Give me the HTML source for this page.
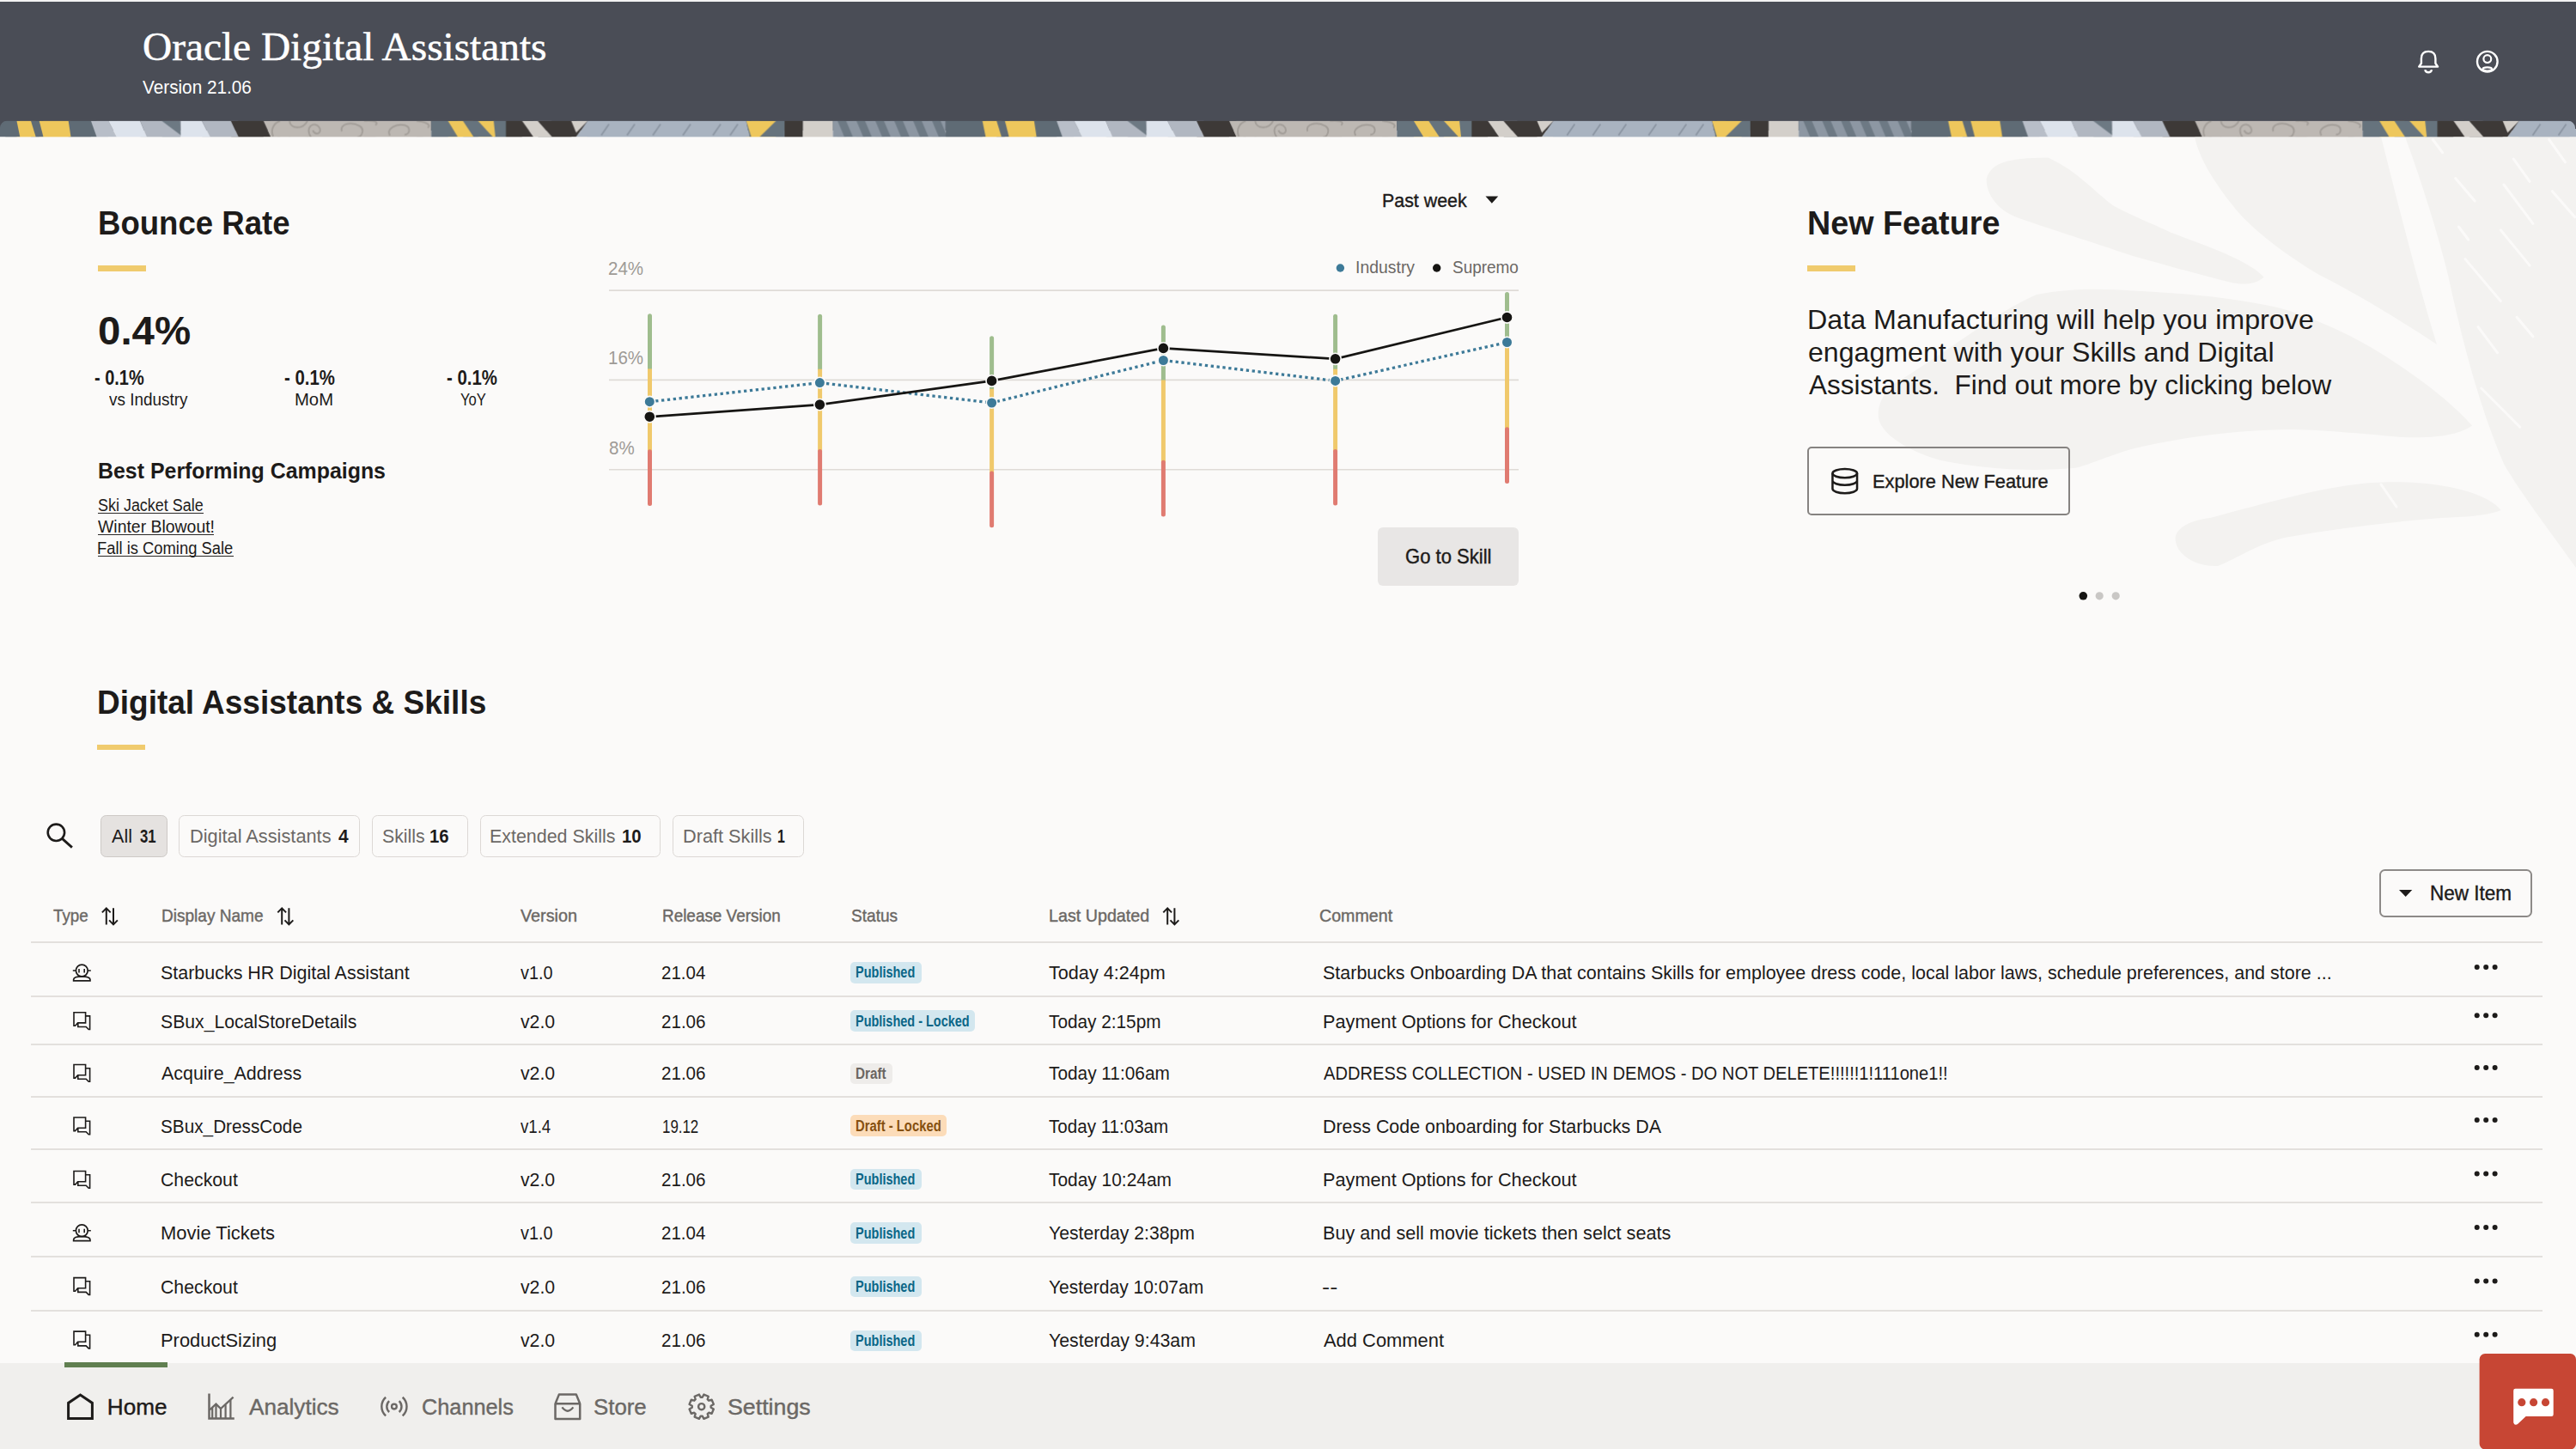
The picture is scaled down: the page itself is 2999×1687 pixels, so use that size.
<!DOCTYPE html>
<html><head><meta charset="utf-8"><title>Oracle Digital Assistants</title>
<style>
html,body{margin:0;padding:0;}
body{width:2999px;height:1687px;overflow:hidden;position:relative;background:#fbfaf9;font-family:"Liberation Sans",sans-serif;}
.t{position:absolute;white-space:nowrap;line-height:1;transform-origin:0 0;}
.b{position:absolute;}
.badge{position:absolute;height:24.5px;border-radius:5px;}
svg{position:absolute;left:0;top:0;}
</style></head><body>
<svg width="2999" height="1687" viewBox="0 0 2999 1687">

<path d="M2312.7,208.3 C2318,190 2335,184 2384.5,183.6 C2420,200 2440,225 2460.8,239.7 C2490,255 2510,262 2528,271 C2580,290 2620,305 2635.7,322.7 C2625,332 2610,331 2600,329.5 C2560,320 2520,308 2483,298 C2430,280 2390,268 2348.6,253.2 C2325,245 2312,225 2312.7,208.3 Z" fill="#f3f2f0"/>
<path d="M2187,486.5 C2185,470 2195,452 2214,441.6 C2280,400 2330,360 2371,343 C2410,335 2450,336 2483,338.4 C2560,342 2620,350 2662.7,360.9 C2720,380 2760,402 2797.3,428 C2830,450 2860,475 2878,495.4 C2860,508 2830,510 2797,509 C2750,505 2700,500 2662.7,500 C2580,502 2530,512 2483,522.4 C2450,532 2430,542 2416,544.8 C2360,550 2300,545 2259,535.8 C2220,525 2190,505 2187,486.5 Z" fill="#f3f2f0"/>
<path d="M2532.6,625.5 C2535,612 2555,605 2573,603 C2640,585 2700,568 2752,562.7 C2830,556 2895,572 2911.7,594 C2890,602 2860,602 2842,603 C2780,608 2720,615 2662.7,625.5 C2630,632 2605,650 2582,659 C2555,660 2532,645 2532.6,625.5 Z" fill="#f3f2f0"/>
<path d="M2555,159 L2772,159 C2790,230 2815,330 2837,401 C2790,370 2740,340 2700,320 C2650,290 2615,260 2600,240 C2580,215 2560,185 2555,159 Z" fill="#f3f2f0"/>
<path d="M2800,159 L2999,159 L2999,661 C2970,620 2935,575 2915,540 C2885,470 2865,390 2850,320 C2835,260 2815,200 2800,159 Z" fill="#f3f2f0"/>
<line x1="2832.3" y1="162.5" x2="2843.6" y2="177.6" stroke="#fbfaf9" stroke-width="3" stroke-linecap="round"/><line x1="2858.6" y1="207.6" x2="2881.2" y2="234" stroke="#fbfaf9" stroke-width="3" stroke-linecap="round"/><line x1="2915" y1="215" x2="2948.9" y2="260.3" stroke="#fbfaf9" stroke-width="3" stroke-linecap="round"/><line x1="2926.3" y1="185" x2="2945.1" y2="211.4" stroke="#fbfaf9" stroke-width="3" stroke-linecap="round"/><line x1="2967.7" y1="162.5" x2="2986.5" y2="188.8" stroke="#fbfaf9" stroke-width="3" stroke-linecap="round"/><line x1="2971.4" y1="222.7" x2="2997.7" y2="252.7" stroke="#fbfaf9" stroke-width="3" stroke-linecap="round"/><line x1="2862.4" y1="264" x2="2873.7" y2="279" stroke="#fbfaf9" stroke-width="3" stroke-linecap="round"/><line x1="2870" y1="301.6" x2="2911.3" y2="350.5" stroke="#fbfaf9" stroke-width="3" stroke-linecap="round"/><line x1="2911.3" y1="267.8" x2="2945.1" y2="309.1" stroke="#fbfaf9" stroke-width="3" stroke-linecap="round"/><line x1="2885" y1="380.6" x2="2907.5" y2="410.6" stroke="#fbfaf9" stroke-width="3" stroke-linecap="round"/><line x1="2930" y1="369.3" x2="2948.9" y2="391.8" stroke="#fbfaf9" stroke-width="3" stroke-linecap="round"/><line x1="2888.7" y1="452" x2="2933.8" y2="497.1" stroke="#fbfaf9" stroke-width="3" stroke-linecap="round"/><line x1="2772" y1="564" x2="2790" y2="590" stroke="#fbfaf9" stroke-width="3" stroke-linecap="round"/>
</svg>
<div class="b" style="left:0;top:0;width:2999px;height:1.6px;background:#f3f3f3"></div>
<div class="b" style="left:0;top:1.6px;width:2999px;height:150px;background:#4a4d56"></div>
<svg width="2999" height="1687" viewBox="0 0 2999 1687">
<defs><pattern id="pt" x="0" y="140.5" width="1124.3" height="19" patternUnits="userSpaceOnUse"><polygon points="-30.0,0.0 110.0,0.0 118.0,19.0 -30.0,19.0" fill="#5f6b75"/><polygon points="19.4,0.0 35.9,0.0 41.7,19.0 23.3,19.0" fill="#eec75c"/><polygon points="45.6,0.0 79.6,0.0 82.5,19.0 50.5,19.0" fill="#eec75c"/><polygon points="105.8,0.0 126.0,0.0 136.0,19.0 112.6,19.0" fill="#b8bec8"/><polygon points="126.0,0.0 163.0,0.0 170.8,19.0 136.0,19.0" fill="#dde3ec"/><polygon points="163.0,0.0 210.6,0.0 210.6,19.0 170.8,19.0" fill="#b1b7c1"/><polygon points="188.0,0.0 209.6,0.0 210.6,17.0" fill="#6d7983"/><polygon points="210.6,0.0 234.9,0.0 244.6,19.0 210.6,19.0" fill="#dde3ec"/><polygon points="234.9,0.0 268.8,0.0 277.6,19.0 244.6,19.0" fill="#b1b7c1"/><polygon points="268.8,0.0 306.7,0.0 315.4,19.0 277.6,19.0" fill="#3d3937"/><polygon points="306.7,0.0 502.0,0.0 502.0,19.0 315.4,19.0" fill="#bdb8b3"/><path transform="translate(0,-140.7)" d="M318,159 C314,150 320,143 326,141 M337,141 C338,150 352,152 358,141 M362,160 C354,148 366,140 372,149 C375,156 367,158 364,152 M398,153 C395,145 408,141 419,147 C425,151 421,160 416,160 M424,141 C434,140 442,142 437,146 M454,158 C449,150 461,144 471,146 C479,148 477,157 471,157 M485,141 C494,142 503,145 498,149" fill="none" stroke="#a39e99" stroke-width="2"/><polygon points="502.0,0.0 593.0,0.0 590.0,19.0 502.0,19.0" fill="#66737d"/><polygon points="521.4,0.0 538.8,0.0 551.4,19.0 533.0,19.0" fill="#eec75c"/><polygon points="556.3,0.0 574.7,0.0 576.7,19.0 573.8,19.0" fill="#eec75c"/><polygon points="589.0,0.0 607.7,0.0 621.3,19.0 589.0,19.0" fill="#3d3937"/><polygon points="607.7,0.0 626.0,0.0 642.7,19.0 621.3,19.0" fill="#d3cfca"/><polygon points="626.0,0.0 684.4,0.0 670.8,19.0 642.7,19.0" fill="#3d3937"/><polygon points="665.0,0.0 684.4,0.0 670.8,14.0" fill="#d3cfca"/><polygon points="684.4,0.0 868.8,0.0 872.7,19.0 670.8,19.0" fill="#a9b3c0"/><line x1="700" y1="17" x2="709" y2="4" stroke="#8a94a1" stroke-width="1.8"/><line x1="730" y1="17" x2="739" y2="4" stroke="#8a94a1" stroke-width="1.8"/><line x1="760" y1="17" x2="769" y2="4" stroke="#8a94a1" stroke-width="1.8"/><line x1="795" y1="17" x2="804" y2="4" stroke="#8a94a1" stroke-width="1.8"/><line x1="830" y1="17" x2="839" y2="4" stroke="#8a94a1" stroke-width="1.8"/><line x1="850" y1="17" x2="859" y2="4" stroke="#8a94a1" stroke-width="1.8"/><polygon points="868.8,0.0 913.4,0.0 913.4,19.0 872.7,19.0" fill="#66737d"/><polygon points="868.8,0.0 903.7,0.0 884.3,19.0 874.6,19.0" fill="#eec75c"/><polygon points="913.4,0.0 934.8,0.0 934.8,19.0 913.4,19.0" fill="#3d3937"/><polygon points="934.8,0.0 969.7,0.0 969.7,19.0 934.8,19.0" fill="#d3cfca"/><polygon points="969.7,0.0 1101.0,0.0 1101.0,19.0 969.7,19.0" fill="#8d97a3"/><polygon points="975.0,0.0 985.0,0.0 993.0,19.0 983.0,19.0" fill="#6d7984"/><polygon points="997.0,0.0 1007.0,0.0 1015.0,19.0 1005.0,19.0" fill="#6d7984"/><polygon points="1019.0,0.0 1029.0,0.0 1037.0,19.0 1027.0,19.0" fill="#6d7984"/><polygon points="1041.0,0.0 1051.0,0.0 1059.0,19.0 1049.0,19.0" fill="#6d7984"/><polygon points="1063.0,0.0 1073.0,0.0 1081.0,19.0 1071.0,19.0" fill="#6d7984"/><polygon points="1085.0,0.0 1095.0,0.0 1103.0,19.0 1093.0,19.0" fill="#6d7984"/><polygon points="1101.0,0.0 1155.0,0.0 1155.0,19.0 1101.0,19.0" fill="#5f6b75"/></pattern>
<clipPath id="bandclip"><rect x="0" y="140.8" width="2998" height="19" rx="8" ry="8"/><rect x="0" y="150" width="2999" height="9.5"/></clipPath></defs>
<rect x="0" y="140.5" width="2999" height="19" fill="url(#pt)" clip-path="url(#bandclip)"/>
</svg>
<div class="b" style="left:114px;top:309.1px;width:56.2px;height:6.5px;background:#f0cb6e"></div><div class="b" style="left:2104px;top:309.1px;width:56.2px;height:6.5px;background:#f0cb6e"></div><div class="b" style="left:112.5px;top:866.9px;width:56.2px;height:6.5px;background:#f0cb6e"></div><div class="b" style="left:114.1px;top:596.85px;width:123.0px;height:1.3px;background:#2a2826"></div><div class="b" style="left:114.1px;top:622.0500000000001px;width:134.9px;height:1.3px;background:#2a2826"></div><div class="b" style="left:114.1px;top:646.65px;width:157.6px;height:1.3px;background:#2a2826"></div><div class="b" style="left:1604.3px;top:614px;width:163.5px;height:68.2px;background:#e8e6e5;border-radius:6px"></div><div class="b" style="left:2104.3px;top:520.4px;width:305.7px;height:79.9px;border:2px solid #868381;border-radius:5px;box-sizing:border-box"></div><div class="b" style="left:117.3px;top:948.7px;width:77.3px;height:48.9px;border-radius:6.5px;box-sizing:border-box;background:#e5e2e0;border:1.5px solid #cdc9c6"></div><div class="b" style="left:208.1px;top:948.7px;width:211.4px;height:48.9px;border-radius:6.5px;box-sizing:border-box;border:1.5px solid #dcd8d5"></div><div class="b" style="left:433px;top:948.7px;width:111.60000000000002px;height:48.9px;border-radius:6.5px;box-sizing:border-box;border:1.5px solid #dcd8d5"></div><div class="b" style="left:558.5px;top:948.7px;width:210.79999999999995px;height:48.9px;border-radius:6.5px;box-sizing:border-box;border:1.5px solid #dcd8d5"></div><div class="b" style="left:782.9px;top:948.7px;width:153.39999999999998px;height:48.9px;border-radius:6.5px;box-sizing:border-box;border:1.5px solid #dcd8d5"></div><div class="b" style="left:2769.8px;top:1012.4px;width:178.6px;height:55.3px;border:2px solid #8d8a88;border-radius:6.5px;box-sizing:border-box"></div><div class="b" style="left:35.6px;top:1096px;width:2924.4px;height:1.5px;background:#e3e0dd"></div><div class="b" style="left:35.6px;top:1159px;width:2924.4px;height:1.5px;background:#e3e0dd"></div><div class="b" style="left:35.6px;top:1215px;width:2924.4px;height:1.5px;background:#e3e0dd"></div><div class="b" style="left:35.6px;top:1276px;width:2924.4px;height:1.5px;background:#e3e0dd"></div><div class="b" style="left:35.6px;top:1337px;width:2924.4px;height:1.5px;background:#e3e0dd"></div><div class="b" style="left:35.6px;top:1399px;width:2924.4px;height:1.5px;background:#e3e0dd"></div><div class="b" style="left:35.6px;top:1462px;width:2924.4px;height:1.5px;background:#e3e0dd"></div><div class="b" style="left:35.6px;top:1525px;width:2924.4px;height:1.5px;background:#e3e0dd"></div><div class="b" style="left:0px;top:1586.5px;width:2999px;height:101px;background:#f0efed"></div><div class="b" style="left:74.7px;top:1586.3px;width:120.4px;height:5.7px;background:#607f50"></div>
<div class="badge" style="left:990.4px;top:1120px;width:82.6px;background:#d3e7ef"></div><div class="badge" style="left:990.4px;top:1176.4px;width:145.1px;background:#d3e7ef"></div><div class="badge" style="left:990.4px;top:1237.5px;width:48.2px;background:#eeecea"></div><div class="badge" style="left:990.4px;top:1298.2px;width:112.1px;background:#fcdcb9"></div><div class="badge" style="left:990.4px;top:1360.6px;width:82.6px;background:#d3e7ef"></div><div class="badge" style="left:990.4px;top:1423.4px;width:82.6px;background:#d3e7ef"></div><div class="badge" style="left:990.4px;top:1485.8px;width:82.6px;background:#d3e7ef"></div><div class="badge" style="left:990.4px;top:1548.5px;width:82.6px;background:#d3e7ef"></div>
<svg width="2999" height="1687" viewBox="0 0 2999 1687">
<line x1="709" y1="338.1" x2="1768" y2="338.1" stroke="#dfdbd7" stroke-width="1.6"/><line x1="709" y1="442.4" x2="1768" y2="442.4" stroke="#dfdbd7" stroke-width="1.6"/><line x1="709" y1="546.8" x2="1768" y2="546.8" stroke="#dfdbd7" stroke-width="1.6"/><line x1="756.5" y1="367.7" x2="756.5" y2="429.4" stroke="#9fbd8e" stroke-width="5" stroke-linecap="round"/><line x1="756.5" y1="429.4" x2="756.5" y2="525.8" stroke="#f0c96c" stroke-width="5"/><line x1="756.5" y1="525.8" x2="756.5" y2="586.4" stroke="#e07b71" stroke-width="5" stroke-linecap="round"/><line x1="954.6" y1="368.2" x2="954.6" y2="429.7" stroke="#9fbd8e" stroke-width="5" stroke-linecap="round"/><line x1="954.6" y1="429.7" x2="954.6" y2="525.4" stroke="#f0c96c" stroke-width="5"/><line x1="954.6" y1="525.4" x2="954.6" y2="586.1" stroke="#e07b71" stroke-width="5" stroke-linecap="round"/><line x1="1154.6" y1="393.8" x2="1154.6" y2="452.8" stroke="#9fbd8e" stroke-width="5" stroke-linecap="round"/><line x1="1154.6" y1="452.8" x2="1154.6" y2="551" stroke="#f0c96c" stroke-width="5"/><line x1="1154.6" y1="551" x2="1154.6" y2="611.7" stroke="#e07b71" stroke-width="5" stroke-linecap="round"/><line x1="1354.4" y1="381.0" x2="1354.4" y2="442.5" stroke="#9fbd8e" stroke-width="5" stroke-linecap="round"/><line x1="1354.4" y1="442.5" x2="1354.4" y2="538.2" stroke="#f0c96c" stroke-width="5"/><line x1="1354.4" y1="538.2" x2="1354.4" y2="598.9" stroke="#e07b71" stroke-width="5" stroke-linecap="round"/><line x1="1554.6" y1="368.2" x2="1554.6" y2="429.7" stroke="#9fbd8e" stroke-width="5" stroke-linecap="round"/><line x1="1554.6" y1="429.7" x2="1554.6" y2="525.4" stroke="#f0c96c" stroke-width="5"/><line x1="1554.6" y1="525.4" x2="1554.6" y2="586.1" stroke="#e07b71" stroke-width="5" stroke-linecap="round"/><line x1="1754.5" y1="342.5" x2="1754.5" y2="404" stroke="#9fbd8e" stroke-width="5" stroke-linecap="round"/><line x1="1754.5" y1="404" x2="1754.5" y2="499.7" stroke="#f0c96c" stroke-width="5"/><line x1="1754.5" y1="499.7" x2="1754.5" y2="560.5" stroke="#e07b71" stroke-width="5" stroke-linecap="round"/><polyline points="756.3,467.7 954.4,445.6 1154.6,469 1354.4,419.5 1554.6,443.4 1754.5,398.5" fill="none" stroke="#3d7a98" stroke-width="3.3" stroke-dasharray="3.3 3.6"/><polyline points="756.3,485.2 954.4,471.1 1154.6,443.4 1354.4,405.4 1554.6,417.8 1754.5,369.5" fill="none" stroke="#161513" stroke-width="2.7"/><circle cx="756.3" cy="467.7" r="6.3" fill="#3d7a98" stroke="#fbfaf9" stroke-width="1.6"/><circle cx="954.4" cy="445.6" r="6.3" fill="#3d7a98" stroke="#fbfaf9" stroke-width="1.6"/><circle cx="1154.6" cy="469" r="6.3" fill="#3d7a98" stroke="#fbfaf9" stroke-width="1.6"/><circle cx="1354.4" cy="419.5" r="6.3" fill="#3d7a98" stroke="#fbfaf9" stroke-width="1.6"/><circle cx="1554.6" cy="443.4" r="6.3" fill="#3d7a98" stroke="#fbfaf9" stroke-width="1.6"/><circle cx="1754.5" cy="398.5" r="6.3" fill="#3d7a98" stroke="#fbfaf9" stroke-width="1.6"/><circle cx="756.3" cy="485.2" r="6.6" fill="#161513" stroke="#fbfaf9" stroke-width="1.6"/><circle cx="954.4" cy="471.1" r="6.6" fill="#161513" stroke="#fbfaf9" stroke-width="1.6"/><circle cx="1154.6" cy="443.4" r="6.6" fill="#161513" stroke="#fbfaf9" stroke-width="1.6"/><circle cx="1354.4" cy="405.4" r="6.6" fill="#161513" stroke="#fbfaf9" stroke-width="1.6"/><circle cx="1554.6" cy="417.8" r="6.6" fill="#161513" stroke="#fbfaf9" stroke-width="1.6"/><circle cx="1754.5" cy="369.5" r="6.6" fill="#161513" stroke="#fbfaf9" stroke-width="1.6"/><circle cx="1560.4" cy="312" r="4.7" fill="#3d7a98"/><circle cx="1672.7" cy="312" r="4.7" fill="#161513"/><polygon points="1729.5,228.6 1744.2,228.6 1736.85,236.7" fill="#1d1b1a"/>
<path d="M2816.2,77.6 L2818.9,73.8 V68.2 C2818.9,62.5 2822.3,59.9 2827.15,59.9 C2832,59.9 2835.4,62.5 2835.4,68.2 V73.8 L2838.1,77.6 Z" fill="none" stroke="#ffffff" stroke-width="2.4" stroke-linejoin="round"/><path d="M2823.2,81.2 A4.1,4.1 0 0 0 2831.1,81.2" fill="none" stroke="#ffffff" stroke-width="2.4"/><circle cx="2895.8" cy="71.7" r="11.8" fill="none" stroke="#ffffff" stroke-width="2.4"/><circle cx="2895.8" cy="68.6" r="4.4" fill="none" stroke="#ffffff" stroke-width="2.2"/><ellipse cx="2895.8" cy="80.4" rx="5.3" ry="2.1" fill="none" stroke="#ffffff" stroke-width="2.2"/><circle cx="65.4" cy="969.3" r="9.7" fill="none" stroke="#1d1b1a" stroke-width="2.6"/><line x1="72.4" y1="976.4" x2="83.9" y2="986.6" stroke="#1d1b1a" stroke-width="2.8"/><path d="M123.8,1076.6 V1057.6 M118.89999999999999,1062.4 L123.8,1057.4 L128.7,1062.4 M132.0,1057.2 V1076.2 M127.1,1071.4 L132.0,1076.4 L136.9,1071.4" fill="none" stroke="#1d1b1a" stroke-width="2"/><path d="M328.2,1076.6 V1057.6 M323.3,1062.4 L328.2,1057.4 L333.09999999999997,1062.4 M336.4,1057.2 V1076.2 M331.5,1071.4 L336.4,1076.4 L341.29999999999995,1071.4" fill="none" stroke="#1d1b1a" stroke-width="2"/><path d="M1359.2,1076.6 V1057.6 M1354.3,1062.4 L1359.2,1057.4 L1364.1000000000001,1062.4 M1367.4,1057.2 V1076.2 M1362.5,1071.4 L1367.4,1076.4 L1372.3000000000002,1071.4" fill="none" stroke="#1d1b1a" stroke-width="2"/><polygon points="2793,1036 2808.3,1036 2800.65,1044" fill="#1d1b1a"/><ellipse cx="2147.75" cy="551.1" rx="14.3" ry="5.1" fill="none" stroke="#1d1b1a" stroke-width="2.5"/><path d="M2133.45,551.1 V569.1 A14.3,5.1 0 0 0 2162.05,569.1 V551.1 M2133.45,559.6 A14.3,5.1 0 0 0 2162.05,559.6" fill="none" stroke="#1d1b1a" stroke-width="2.5"/><circle cx="2425.3" cy="693.8" r="4.8" fill="#161513"/><circle cx="2444.2" cy="693.8" r="4.6" fill="#c9c7c5"/><circle cx="2463.2" cy="693.8" r="4.6" fill="#c9c7c5"/><g transform="translate(84.8,1122.2)" fill="none" stroke="#1d1b1a" stroke-width="1.7"><circle cx="10.5" cy="7.8" r="6.9"/><path d="M0,7.8 H3.4 M17.6,7.8 H21 M7.2,5.8 V10.2 M13.4,5.8 V10.2" stroke-width="1.6"/><path d="M0.85,19.6 V18.4 C0.85,15.8 4,14.6 10.5,14.6 C17,14.6 20.15,15.8 20.15,18.4 V19.6 Z"/></g><g transform="translate(85.2,1177.8999999999999)" fill="none" stroke="#1d1b1a" stroke-width="1.6" stroke-linejoin="miter"><path d="M0.8,0.8 H14.4 V13 H5.4 L2.4,16.4 H0.8 Z"/><path d="M14.4,5 H19.4 V20.6 H18 L15,17.6 H5.6 V13"/></g><g transform="translate(85.2,1238.7)" fill="none" stroke="#1d1b1a" stroke-width="1.6" stroke-linejoin="miter"><path d="M0.8,0.8 H14.4 V13 H5.4 L2.4,16.4 H0.8 Z"/><path d="M14.4,5 H19.4 V20.6 H18 L15,17.6 H5.6 V13"/></g><g transform="translate(85.2,1300.2)" fill="none" stroke="#1d1b1a" stroke-width="1.6" stroke-linejoin="miter"><path d="M0.8,0.8 H14.4 V13 H5.4 L2.4,16.4 H0.8 Z"/><path d="M14.4,5 H19.4 V20.6 H18 L15,17.6 H5.6 V13"/></g><g transform="translate(85.2,1362.7)" fill="none" stroke="#1d1b1a" stroke-width="1.6" stroke-linejoin="miter"><path d="M0.8,0.8 H14.4 V13 H5.4 L2.4,16.4 H0.8 Z"/><path d="M14.4,5 H19.4 V20.6 H18 L15,17.6 H5.6 V13"/></g><g transform="translate(84.8,1425)" fill="none" stroke="#1d1b1a" stroke-width="1.7"><circle cx="10.5" cy="7.8" r="6.9"/><path d="M0,7.8 H3.4 M17.6,7.8 H21 M7.2,5.8 V10.2 M13.4,5.8 V10.2" stroke-width="1.6"/><path d="M0.85,19.6 V18.4 C0.85,15.8 4,14.6 10.5,14.6 C17,14.6 20.15,15.8 20.15,18.4 V19.6 Z"/></g><g transform="translate(85.2,1486.8)" fill="none" stroke="#1d1b1a" stroke-width="1.6" stroke-linejoin="miter"><path d="M0.8,0.8 H14.4 V13 H5.4 L2.4,16.4 H0.8 Z"/><path d="M14.4,5 H19.4 V20.6 H18 L15,17.6 H5.6 V13"/></g><g transform="translate(85.2,1549.3)" fill="none" stroke="#1d1b1a" stroke-width="1.6" stroke-linejoin="miter"><path d="M0.8,0.8 H14.4 V13 H5.4 L2.4,16.4 H0.8 Z"/><path d="M14.4,5 H19.4 V20.6 H18 L15,17.6 H5.6 V13"/></g><circle cx="2883.7" cy="1126" r="3" fill="#1d1b1a"/><circle cx="2894.2" cy="1126" r="3" fill="#1d1b1a"/><circle cx="2904.6" cy="1126" r="3" fill="#1d1b1a"/><circle cx="2883.7" cy="1182.2" r="3" fill="#1d1b1a"/><circle cx="2894.2" cy="1182.2" r="3" fill="#1d1b1a"/><circle cx="2904.6" cy="1182.2" r="3" fill="#1d1b1a"/><circle cx="2883.7" cy="1243" r="3" fill="#1d1b1a"/><circle cx="2894.2" cy="1243" r="3" fill="#1d1b1a"/><circle cx="2904.6" cy="1243" r="3" fill="#1d1b1a"/><circle cx="2883.7" cy="1303.9" r="3" fill="#1d1b1a"/><circle cx="2894.2" cy="1303.9" r="3" fill="#1d1b1a"/><circle cx="2904.6" cy="1303.9" r="3" fill="#1d1b1a"/><circle cx="2883.7" cy="1366.5" r="3" fill="#1d1b1a"/><circle cx="2894.2" cy="1366.5" r="3" fill="#1d1b1a"/><circle cx="2904.6" cy="1366.5" r="3" fill="#1d1b1a"/><circle cx="2883.7" cy="1429" r="3" fill="#1d1b1a"/><circle cx="2894.2" cy="1429" r="3" fill="#1d1b1a"/><circle cx="2904.6" cy="1429" r="3" fill="#1d1b1a"/><circle cx="2883.7" cy="1491.6" r="3" fill="#1d1b1a"/><circle cx="2894.2" cy="1491.6" r="3" fill="#1d1b1a"/><circle cx="2904.6" cy="1491.6" r="3" fill="#1d1b1a"/><circle cx="2883.7" cy="1553.8" r="3" fill="#1d1b1a"/><circle cx="2894.2" cy="1553.8" r="3" fill="#1d1b1a"/><circle cx="2904.6" cy="1553.8" r="3" fill="#1d1b1a"/><path d="M79.6,1651.6 V1633.4 L93.5,1624 L107.4,1633.4 V1651.6 Z" fill="none" stroke="#1d1b1a" stroke-width="3" stroke-linejoin="miter"/><path d="M243.5,1622.4 V1651.5 H272.8" fill="none" stroke="#6b6865" stroke-width="2.5"/><path d="M244,1641.5 L251.5,1634.6 L257,1640 L271.6,1626.6" fill="none" stroke="#6b6865" stroke-width="2.3"/><path d="M247.2,1638.6 V1651 M251.5,1635 V1651 M257,1640 V1651 M262.6,1635.2 V1651 M268.4,1629.8 V1651" fill="none" stroke="#6b6865" stroke-width="2.2"/><circle cx="458.9" cy="1637.6" r="2.9" fill="none" stroke="#6b6865" stroke-width="2.3"/><path d="M453.15,1631.21 A8.6,8.6 0 0 0 453.15,1643.99 M464.65,1631.21 A8.6,8.6 0 0 1 464.65,1643.99 M449.13,1626.75 A14.6,14.6 0 0 0 449.13,1648.45 M468.67,1626.75 A14.6,14.6 0 0 1 468.67,1648.45" fill="none" stroke="#6b6865" stroke-width="2.4"/><path d="M646.5,1634.2 V1651.9 H675.2 V1634.2 Z M646.5,1634.2 L650.8,1623.6 H670.9 L675.2,1634.2" fill="none" stroke="#6b6865" stroke-width="2.5" stroke-linejoin="round"/><path d="M654.4,1638.4 Q660.85,1647 667.3,1638.4" fill="none" stroke="#6b6865" stroke-width="2.4"/><path d="M827.21,1634.45 L830.81,1634.84 L830.81,1640.56 L827.21,1640.95 L826.43,1642.83 L828.70,1645.66 L824.66,1649.70 L821.83,1647.43 L819.95,1648.21 L819.56,1651.81 L813.84,1651.81 L813.45,1648.21 L811.57,1647.43 L808.74,1649.70 L804.70,1645.66 L806.97,1642.83 L806.19,1640.95 L802.59,1640.56 L802.59,1634.84 L806.19,1634.45 L806.97,1632.57 L804.70,1629.74 L808.74,1625.70 L811.57,1627.97 L813.45,1627.19 L813.84,1623.59 L819.56,1623.59 L819.95,1627.19 L821.83,1627.97 L824.66,1625.70 L828.70,1629.74 L826.43,1632.57 Z" fill="none" stroke="#6b6865" stroke-width="2.4" stroke-linejoin="round" transform="rotate(22.5 816.7 1637.7)"/><circle cx="816.7" cy="1637.7" r="3.6" fill="none" stroke="#6b6865" stroke-width="2.4"/><rect x="2886.6" y="1576" width="112.4" height="111.5" rx="6.5" fill="#c74634"/><path d="M2928.4,1616.8 H2970.5 Q2972.7,1616.8 2972.7,1619 V1646.8 Q2972.7,1649 2970.5,1649 H2940.6 L2931.6,1657.6 Q2927.6,1660.6 2926.2,1656.2 V1619 Q2926.2,1616.8 2928.4,1616.8 Z" fill="#ffffff"/><circle cx="2935.8" cy="1632.7" r="4.6" fill="#c74634"/><circle cx="2949.6" cy="1632.7" r="4.6" fill="#c74634"/><circle cx="2963.5" cy="1632.7" r="4.6" fill="#c74634"/>
</svg>
<div class="t" style="left:165.68px;top:32.30px;font-size:46.43px;color:#ffffff;font-family:'Liberation Serif',serif;-webkit-text-stroke:0.5px #fff;transform:scaleX(1.0193)">Oracle Digital Assistants</div>
<div class="t" style="left:166.00px;top:91.30px;font-size:21.66px;color:#ffffff;transform:scaleX(0.9577)">Version 21.06</div>
<div class="t" style="left:114.15px;top:240.20px;font-size:39.54px;color:#1d1b1a;font-weight:700;transform:scaleX(0.9252)">Bounce Rate</div>
<div class="t" style="left:114.29px;top:362.40px;font-size:46.95px;color:#1d1b1a;font-weight:700;transform:scaleX(1.0109)">0.4%</div>
<div class="t" style="left:110.10px;top:429.20px;font-size:23.55px;color:#1d1b1a;font-weight:700;transform:scaleX(0.8485)">- 0.1%</div>
<div class="t" style="left:126.90px;top:455.80px;font-size:19.33px;color:#1d1b1a;transform:scaleX(0.9799)">vs Industry</div>
<div class="t" style="left:331.00px;top:429.20px;font-size:23.55px;color:#1d1b1a;font-weight:700;transform:scaleX(0.8662)">- 0.1%</div>
<div class="t" style="left:342.95px;top:455.80px;font-size:19.33px;color:#1d1b1a;transform:scaleX(1.0477)">MoM</div>
<div class="t" style="left:520.00px;top:429.20px;font-size:23.55px;color:#1d1b1a;font-weight:700;transform:scaleX(0.8662)">- 0.1%</div>
<div class="t" style="left:536.00px;top:455.80px;font-size:19.33px;color:#1d1b1a;transform:scaleX(0.8604)">YoY</div>
<div class="t" style="left:113.76px;top:534.60px;font-size:26.6px;color:#1d1b1a;font-weight:700;transform:scaleX(0.9367)">Best Performing Campaigns</div>
<div class="t" style="left:114.40px;top:578.90px;font-size:19.77px;color:#1d1b1a;transform:scaleX(0.9080)">Ski Jacket Sale</div>
<div class="t" style="left:114.40px;top:603.70px;font-size:19.77px;color:#1d1b1a;transform:scaleX(0.9824)">Winter Blowout!</div>
<div class="t" style="left:113.47px;top:628.90px;font-size:19.77px;color:#1d1b1a;transform:scaleX(0.9293)">Fall is Coming Sale</div>
<div class="t" style="left:708.05px;top:302.60px;font-size:21.51px;color:#9e9a96;transform:scaleX(0.9543)">24%</div>
<div class="t" style="left:708.05px;top:406.70px;font-size:21.51px;color:#9e9a96;transform:scaleX(0.9543)">16%</div>
<div class="t" style="left:709.00px;top:511.50px;font-size:21.51px;color:#9e9a96;transform:scaleX(0.9543)">8%</div>
<div class="t" style="left:1577.57px;top:301.20px;font-size:20.79px;color:#6b6865;transform:scaleX(0.9343)">Industry</div>
<div class="t" style="left:1690.50px;top:301.20px;font-size:20.79px;color:#6b6865;transform:scaleX(0.9121)">Supremo</div>
<div class="t" style="left:1609.06px;top:221.50px;font-size:22.82px;color:#1d1b1a;-webkit-text-stroke:0.4px #1d1b1a;transform:scaleX(0.9367)">Past week</div>
<div class="t" style="left:1635.75px;top:637.00px;font-size:23.26px;color:#1d1b1a;-webkit-text-stroke:0.4px #1d1b1a;transform:scaleX(0.9481)">Go to Skill</div>
<div class="t" style="left:2104.26px;top:241.10px;font-size:38.95px;color:#1d1b1a;font-weight:700;transform:scaleX(0.9691)">New Feature</div>
<div class="t" style="left:2103.99px;top:356.30px;font-size:32.12px;color:#1d1b1a;transform:scaleX(1.0046)">Data Manufacturing will help you improve</div>
<div class="t" style="left:2105.00px;top:393.80px;font-size:32.12px;color:#1d1b1a">engagment with your Skills and Digital</div>
<div class="t" style="left:2106.00px;top:431.50px;font-size:32.12px;color:#1d1b1a;transform:scaleX(0.9793)">Assistants.  Find out more by clicking below</div>
<div class="t" style="left:2179.74px;top:549.10px;font-size:22.67px;color:#1d1b1a;-webkit-text-stroke:0.4px #1d1b1a;transform:scaleX(0.9616)">Explore New Feature</div>
<div class="t" style="left:112.91px;top:797.90px;font-size:39.24px;color:#1d1b1a;font-weight:700;transform:scaleX(0.9435)">Digital Assistants &amp; Skills</div>
<div class="t" style="left:129.80px;top:962.90px;font-size:22.53px;color:#1d1b1a;transform:scaleX(0.9575)">All</div>
<div class="t" style="left:162.80px;top:962.90px;font-size:22.53px;color:#1d1b1a;font-weight:700;transform:scaleX(0.7463)">31</div>
<div class="t" style="left:220.73px;top:962.90px;font-size:22.53px;color:#6b6865;transform:scaleX(0.9667)">Digital Assistants</div>
<div class="t" style="left:394.30px;top:962.90px;font-size:22.53px;color:#1d1b1a;font-weight:700;transform:scaleX(0.9308)">4</div>
<div class="t" style="left:444.75px;top:962.90px;font-size:22.53px;color:#6b6865;transform:scaleX(0.9457)">Skills</div>
<div class="t" style="left:499.90px;top:962.90px;font-size:22.53px;color:#1d1b1a;font-weight:700;transform:scaleX(0.9013)">16</div>
<div class="t" style="left:570.35px;top:962.90px;font-size:22.53px;color:#6b6865;transform:scaleX(0.9510)">Extended Skills</div>
<div class="t" style="left:723.79px;top:962.90px;font-size:22.53px;color:#1d1b1a;font-weight:700;transform:scaleX(0.9055)">10</div>
<div class="t" style="left:795.14px;top:962.90px;font-size:22.53px;color:#6b6865;transform:scaleX(0.9640)">Draft Skills</div>
<div class="t" style="left:904.89px;top:962.90px;font-size:22.53px;color:#1d1b1a;font-weight:700;transform:scaleX(0.7091)">1</div>
<div class="t" style="left:61.60px;top:1056.20px;font-size:20.2px;color:#6b6865;-webkit-text-stroke:0.4px #6b6865;transform:scaleX(0.9325)">Type</div>
<div class="t" style="left:187.76px;top:1056.20px;font-size:20.2px;color:#6b6865;-webkit-text-stroke:0.4px #6b6865;transform:scaleX(0.9436)">Display Name</div>
<div class="t" style="left:606.00px;top:1056.20px;font-size:20.2px;color:#6b6865;-webkit-text-stroke:0.4px #6b6865;transform:scaleX(0.9802)">Version</div>
<div class="t" style="left:770.76px;top:1056.20px;font-size:20.2px;color:#6b6865;-webkit-text-stroke:0.4px #6b6865;transform:scaleX(0.9366)">Release Version</div>
<div class="t" style="left:990.70px;top:1056.20px;font-size:20.2px;color:#6b6865;-webkit-text-stroke:0.4px #6b6865;transform:scaleX(0.9451)">Status</div>
<div class="t" style="left:1221.02px;top:1056.20px;font-size:20.2px;color:#6b6865;-webkit-text-stroke:0.4px #6b6865;transform:scaleX(0.9757)">Last Updated</div>
<div class="t" style="left:1536.43px;top:1056.20px;font-size:20.2px;color:#6b6865;-webkit-text-stroke:0.4px #6b6865;transform:scaleX(0.9736)">Comment</div>
<div class="t" style="left:2828.83px;top:1029.20px;font-size:23.26px;color:#1d1b1a;-webkit-text-stroke:0.4px #1d1b1a;transform:scaleX(0.9685)">New Item</div>
<div class="t" style="left:186.96px;top:1121.20px;font-size:22.82px;color:#1d1b1a;transform:scaleX(0.9401)">Starbucks HR Digital Assistant</div>
<div class="t" style="left:606.00px;top:1121.20px;font-size:22.82px;color:#1d1b1a;transform:scaleX(0.8673)">v1.0</div>
<div class="t" style="left:770.40px;top:1121.20px;font-size:22.82px;color:#1d1b1a;transform:scaleX(0.8989)">21.04</div>
<div class="t" style="left:1221.00px;top:1121.20px;font-size:22.82px;color:#1d1b1a;transform:scaleX(0.9480)">Today 4:24pm</div>
<div class="t" style="left:1539.76px;top:1121.20px;font-size:22.82px;color:#1d1b1a;transform:scaleX(0.9414)">Starbucks Onboarding DA that contains Skills for employee dress code, local labor laws, schedule preferences, and store ...</div>
<div class="t" style="left:186.97px;top:1177.60px;font-size:22.82px;color:#1d1b1a;transform:scaleX(0.9285)">SBux_LocalStoreDetails</div>
<div class="t" style="left:606.00px;top:1177.60px;font-size:22.82px;color:#1d1b1a;transform:scaleX(0.9309)">v2.0</div>
<div class="t" style="left:770.40px;top:1177.60px;font-size:22.82px;color:#1d1b1a;transform:scaleX(0.9025)">21.06</div>
<div class="t" style="left:1221.00px;top:1177.60px;font-size:22.82px;color:#1d1b1a;transform:scaleX(0.9108)">Today 2:15pm</div>
<div class="t" style="left:1539.75px;top:1177.60px;font-size:22.82px;color:#1d1b1a;transform:scaleX(0.9516)">Payment Options for Checkout</div>
<div class="t" style="left:187.90px;top:1238.40px;font-size:22.82px;color:#1d1b1a;transform:scaleX(0.9393)">Acquire_Address</div>
<div class="t" style="left:606.00px;top:1238.40px;font-size:22.82px;color:#1d1b1a;transform:scaleX(0.9309)">v2.0</div>
<div class="t" style="left:770.40px;top:1238.40px;font-size:22.82px;color:#1d1b1a;transform:scaleX(0.9025)">21.06</div>
<div class="t" style="left:1221.00px;top:1238.40px;font-size:22.82px;color:#1d1b1a;transform:scaleX(0.9126)">Today 11:06am</div>
<div class="t" style="left:1540.70px;top:1238.40px;font-size:22.82px;color:#1d1b1a;transform:scaleX(0.8818)">ADDRESS COLLECTION - USED IN DEMOS - DO NOT DELETE!!!!!!1!111one1!!</div>
<div class="t" style="left:186.99px;top:1299.90px;font-size:22.82px;color:#1d1b1a;transform:scaleX(0.9096)">SBux_DressCode</div>
<div class="t" style="left:606.00px;top:1299.90px;font-size:22.82px;color:#1d1b1a;transform:scaleX(0.8174)">v1.4</div>
<div class="t" style="left:770.56px;top:1299.90px;font-size:22.82px;color:#1d1b1a;transform:scaleX(0.7401)">19.12</div>
<div class="t" style="left:1221.00px;top:1299.90px;font-size:22.82px;color:#1d1b1a;transform:scaleX(0.9022)">Today 11:03am</div>
<div class="t" style="left:1539.76px;top:1299.90px;font-size:22.82px;color:#1d1b1a;transform:scaleX(0.9388)">Dress Code onboarding for Starbucks DA</div>
<div class="t" style="left:186.97px;top:1362.40px;font-size:22.82px;color:#1d1b1a;transform:scaleX(0.9319)">Checkout</div>
<div class="t" style="left:606.00px;top:1362.40px;font-size:22.82px;color:#1d1b1a;transform:scaleX(0.9309)">v2.0</div>
<div class="t" style="left:770.40px;top:1362.40px;font-size:22.82px;color:#1d1b1a;transform:scaleX(0.9025)">21.06</div>
<div class="t" style="left:1221.00px;top:1362.40px;font-size:22.82px;color:#1d1b1a;transform:scaleX(0.9162)">Today 10:24am</div>
<div class="t" style="left:1539.75px;top:1362.40px;font-size:22.82px;color:#1d1b1a;transform:scaleX(0.9516)">Payment Options for Checkout</div>
<div class="t" style="left:186.94px;top:1424.00px;font-size:22.82px;color:#1d1b1a;transform:scaleX(0.9629)">Movie Tickets</div>
<div class="t" style="left:606.00px;top:1424.00px;font-size:22.82px;color:#1d1b1a;transform:scaleX(0.8673)">v1.0</div>
<div class="t" style="left:770.40px;top:1424.00px;font-size:22.82px;color:#1d1b1a;transform:scaleX(0.8989)">21.04</div>
<div class="t" style="left:1221.00px;top:1424.00px;font-size:22.82px;color:#1d1b1a;transform:scaleX(0.9284)">Yesterday 2:38pm</div>
<div class="t" style="left:1539.75px;top:1424.00px;font-size:22.82px;color:#1d1b1a;transform:scaleX(0.9486)">Buy and sell movie tickets then selct seats</div>
<div class="t" style="left:186.97px;top:1486.50px;font-size:22.82px;color:#1d1b1a;transform:scaleX(0.9319)">Checkout</div>
<div class="t" style="left:606.00px;top:1486.50px;font-size:22.82px;color:#1d1b1a;transform:scaleX(0.9309)">v2.0</div>
<div class="t" style="left:770.40px;top:1486.50px;font-size:22.82px;color:#1d1b1a;transform:scaleX(0.9025)">21.06</div>
<div class="t" style="left:1221.00px;top:1486.50px;font-size:22.82px;color:#1d1b1a;transform:scaleX(0.9208)">Yesterday 10:07am</div>
<div class="t" style="left:1539.49px;top:1486.50px;font-size:22.82px;color:#1d1b1a;transform:scaleX(1.2062)">--</div>
<div class="t" style="left:186.94px;top:1549.00px;font-size:22.82px;color:#1d1b1a;transform:scaleX(0.9600)">ProductSizing</div>
<div class="t" style="left:606.00px;top:1549.00px;font-size:22.82px;color:#1d1b1a;transform:scaleX(0.9309)">v2.0</div>
<div class="t" style="left:770.40px;top:1549.00px;font-size:22.82px;color:#1d1b1a;transform:scaleX(0.9025)">21.06</div>
<div class="t" style="left:1221.00px;top:1549.00px;font-size:22.82px;color:#1d1b1a;transform:scaleX(0.9338)">Yesterday 9:43am</div>
<div class="t" style="left:1540.70px;top:1549.00px;font-size:22.82px;color:#1d1b1a;transform:scaleX(0.9606)">Add Comment</div>
<div class="t" style="left:124.80px;top:1624.90px;font-size:26.16px;color:#1d1b1a;-webkit-text-stroke:0.4px #1d1b1a">Home</div>
<div class="t" style="left:290.00px;top:1624.90px;font-size:26.16px;color:#6b6865;-webkit-text-stroke:0.4px #6b6865">Analytics</div>
<div class="t" style="left:490.53px;top:1624.90px;font-size:26.16px;color:#6b6865;-webkit-text-stroke:0.4px #6b6865;transform:scaleX(0.9668)">Channels</div>
<div class="t" style="left:691.21px;top:1624.90px;font-size:26.16px;color:#6b6865;-webkit-text-stroke:0.4px #6b6865;transform:scaleX(0.9874)">Store</div>
<div class="t" style="left:847.38px;top:1624.90px;font-size:26.16px;color:#6b6865;-webkit-text-stroke:0.4px #6b6865;transform:scaleX(1.0232)">Settings</div>
<div class="t" style="left:996.27px;top:1124.40px;font-size:17.44px;color:#0b6687;font-weight:700;transform:scaleX(0.8314)">Published</div>
<div class="t" style="left:996.27px;top:1180.80px;font-size:17.44px;color:#0b6687;font-weight:700;transform:scaleX(0.8299)">Published - Locked</div>
<div class="t" style="left:996.22px;top:1241.90px;font-size:17.44px;color:#6a6561;font-weight:700;transform:scaleX(0.8750)">Draft</div>
<div class="t" style="left:996.25px;top:1302.60px;font-size:17.44px;color:#85500f;font-weight:700;transform:scaleX(0.8505)">Draft - Locked</div>
<div class="t" style="left:996.27px;top:1365.00px;font-size:17.44px;color:#0b6687;font-weight:700;transform:scaleX(0.8314)">Published</div>
<div class="t" style="left:996.27px;top:1427.80px;font-size:17.44px;color:#0b6687;font-weight:700;transform:scaleX(0.8314)">Published</div>
<div class="t" style="left:996.27px;top:1490.20px;font-size:17.44px;color:#0b6687;font-weight:700;transform:scaleX(0.8314)">Published</div>
<div class="t" style="left:996.27px;top:1552.90px;font-size:17.44px;color:#0b6687;font-weight:700;transform:scaleX(0.8314)">Published</div>
</body></html>
